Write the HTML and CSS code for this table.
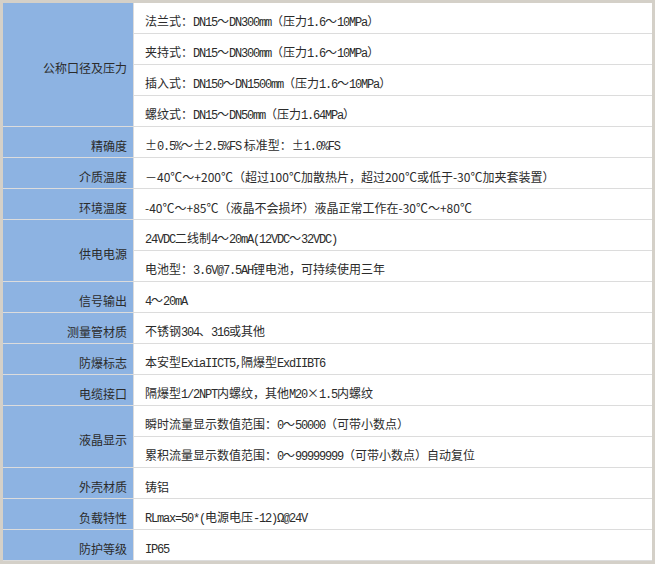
FILE: index.html
```html
<!DOCTYPE html>
<html lang="zh-CN">
<head>
<meta charset="utf-8">
<title>技术参数</title>
<link rel="stylesheet" href="styles.css">
</head>
<body>
<div class="frame">
<table class="spec">
  <colgroup><col class="c-label"><col class="c-value"></colgroup>
  <tbody>
    <tr><th rowspan="4">公称口径及压力</th><td>法兰式：<span class="m">DN15</span>～<span class="m">DN300mm</span>（压力<span class="m">1.6</span>～<span class="m">10MPa</span>）</td></tr>
    <tr><td>夹持式：<span class="m">DN15</span>～<span class="m">DN300mm</span>（压力<span class="m">1.6</span>～<span class="m">10MPa</span>）</td></tr>
    <tr><td>插入式：<span class="m">DN150</span>～<span class="m">DN1500mm</span>（压力<span class="m">1.6</span>～<span class="m">10MPa</span>）</td></tr>
    <tr><td>螺纹式：<span class="m">DN15</span>～<span class="m">DN50mm</span>（压力<span class="m">1.64MPa</span>）</td></tr>
    <tr><th>精确度</th><td>±<span class="m">0.5%</span>～±<span class="m">2.5%FS</span> 标准型：±<span class="m">1.0%FS</span></td></tr>
    <tr><th>介质温度</th><td>－40℃～+200℃（超过100℃加散热片，超过200℃或低于-30℃加夹套装置）</td></tr>
    <tr><th>环境温度</th><td>-40℃～+85℃（液晶不会损坏）液晶正常工作在-30℃～+80℃</td></tr>
    <tr><th rowspan="2">供电电源</th><td><span class="m">24VDC</span>二线制<span class="m">4</span>～<span class="m">20mA(12VDC</span>～<span class="m">32VDC)</span></td></tr>
    <tr><td>电池型：<span class="m">3.6V@7.5AH</span>锂电池，可持续使用三年</td></tr>
    <tr><th>信号输出</th><td><span class="m">4</span>～<span class="m">20mA</span></td></tr>
    <tr><th>测量管材质</th><td>不锈钢<span class="m">304</span>、<span class="m">316</span>或其他</td></tr>
    <tr><th>防爆标志</th><td>本安型<span class="m">ExiaIICT5,</span>隔爆型<span class="m">ExdIIBT6</span></td></tr>
    <tr><th>电缆接口</th><td>隔爆型<span class="m">1/2NPT</span>内螺纹，其他<span class="m">M20</span>×<span class="m">1.5</span>内螺纹</td></tr>
    <tr><th rowspan="2">液晶显示</th><td>瞬时流量显示数值范围：<span class="m">0</span>～<span class="m">50000</span>（可带小数点）</td></tr>
    <tr><td>累积流量显示数值范围：<span class="m">0</span>～<span class="m">99999999</span>（可带小数点）自动复位</td></tr>
    <tr><th>外壳材质</th><td>铸铝</td></tr>
    <tr><th>负载特性</th><td><span class="m">RLmax=50*(</span>电源电压<span class="m">-12)Ω@24V</span></td></tr>
    <tr><th>防护等级</th><td><span class="m">IP65</span></td></tr>
  </tbody>
</table>
</div>
</body>
</html>
```
FILE: styles.css
```css
html, body {
  margin: 0;
  padding: 0;
  background: #ffffff;
}

.frame {
  width: 649px;
  border: 3px solid #d4d0c8;
  background: #ffffff;
}

.spec {
  width: 649px;
  border-collapse: separate;
  border-spacing: 0;
  table-layout: fixed;
  font-family: "Noto Sans CJK SC", "Noto Sans", sans-serif;
  font-size: 12px;
  line-height: 16px;
  color: #2b2b2b;
}

.c-label { width: 131px; }
.c-value { width: 518px; }

.spec th,
.spec td {
  height: 23px;
  padding: 7px 0 0 0;
  border-bottom: 1px solid #dcdcdc;
  vertical-align: middle;
  white-space: nowrap;
}

.spec th {
  background: #8db3e2;
  border-right: 1px solid #dcdcdc;
  text-align: right;
  font-weight: normal;
  padding-right: 6px;
}

.spec td {
  text-align: left;
  padding-left: 11px;
}

.m {
  font-family: "Liberation Mono", "DejaVu Sans Mono", monospace;
  font-size: 12px;
  letter-spacing: -1.2px;
}
```
